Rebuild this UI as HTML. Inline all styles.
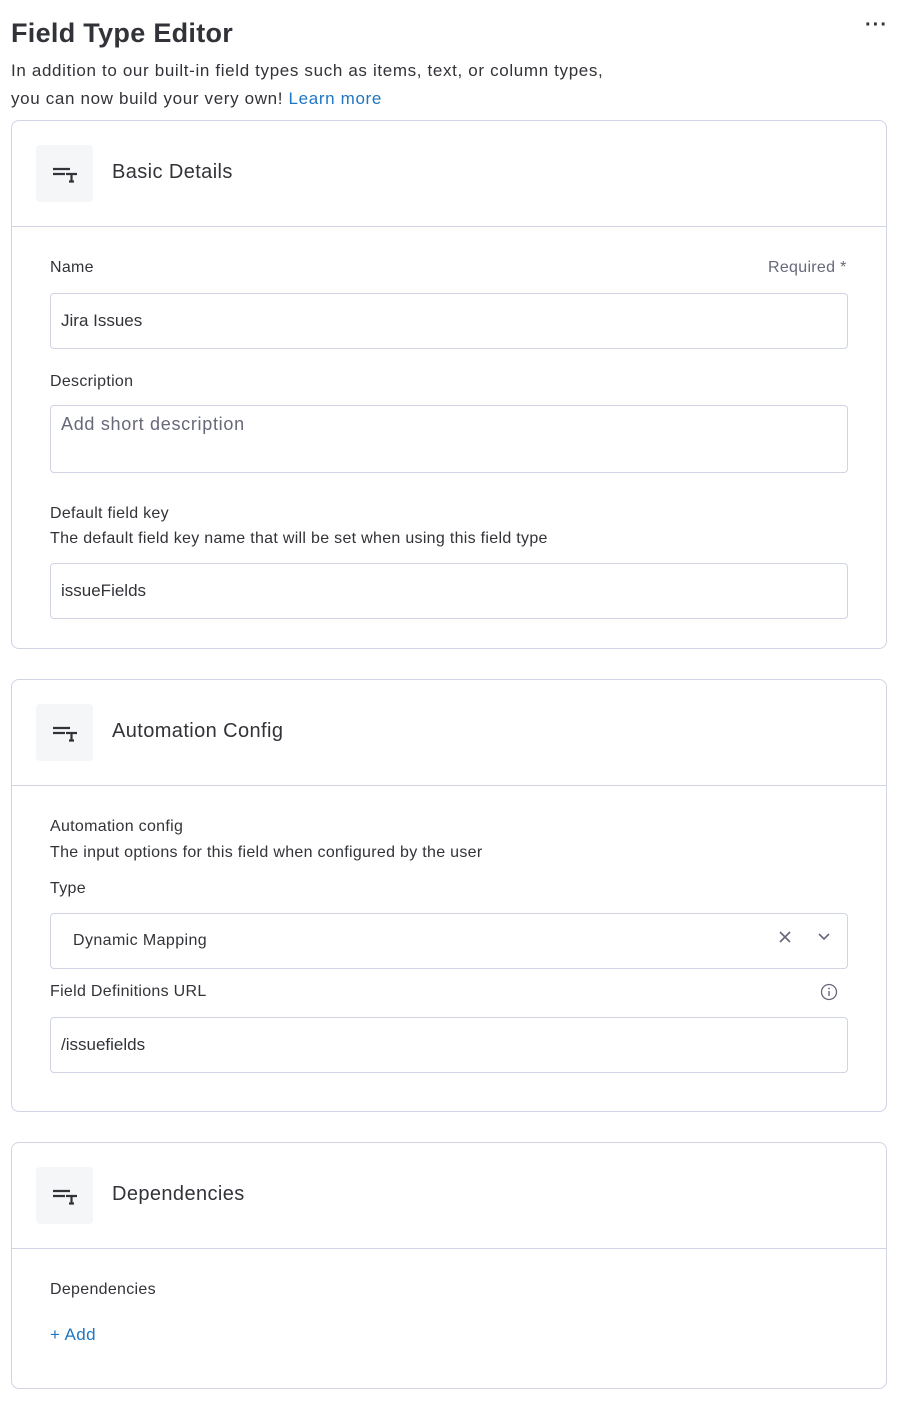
<!DOCTYPE html>
<html><head><style>
*{box-sizing:border-box;margin:0;padding:0}
body{width:900px;height:1404px;background:#fff;font-family:"Liberation Sans",sans-serif;color:#323338;position:relative;overflow:hidden}
.a{position:absolute}
.card{position:absolute;left:11px;width:876px;border:1px solid #d0d4e4;border-radius:8px}
.div{position:absolute;left:0;right:0;height:1px;background:#d0d4e4}
.ib{position:absolute;left:24px;top:24px;width:57px;height:57px;background:#f5f6f8;border-radius:4px}
.ht{position:absolute;left:100px;top:40px;font-size:20px;letter-spacing:0.4px}
.lbl{position:absolute;font-size:16px;letter-spacing:0.3px;color:#323338}
.inp{position:absolute;left:50px;width:798px;border:1px solid #d0d4e4;border-radius:4px;font-size:17px;padding-left:10px}
</style></head><body>
<div class="a" style="left:11px;top:18px;font-size:27px;font-weight:bold;letter-spacing:0.3px">Field Type Editor</div>
<div class="a" style="left:865px;top:14px;font-size:20px;font-weight:bold;letter-spacing:1px">···</div>
<div class="a" style="left:11px;top:57px;font-size:17px;line-height:28px;letter-spacing:0.65px">In addition to our built-in field types such as items, text, or column types,<br>you can now build your very own! <span style="color:#1f76c2">Learn more</span></div>

<div class="card" style="top:120px;height:529px">
<div class="ib"><svg class="a" style="left:16px;top:20px" width="26" height="18" viewBox="0 0 26 18"><path d="M1 4h17M1 9h12M14 9h11M19.5 9v8M17 16.5h5" stroke="#323338" stroke-width="2.2" fill="none"/></svg></div>
<div class="ht">Basic Details</div>
<div class="div" style="top:105px"></div>
</div>
<div class="lbl" style="left:50px;top:259px">Name</div>
<div class="lbl" style="left:768px;top:259px;color:#676879">Required *</div>
<div class="inp" style="top:293px;height:56px;line-height:54px">Jira Issues</div>
<div class="lbl" style="left:50px;top:373px">Description</div>
<div class="inp" style="top:405px;height:68px;padding-top:8px;color:#676879;font-size:18px;letter-spacing:0.7px">Add short description</div>
<div class="lbl" style="left:50px;top:505px">Default field key</div>
<div class="lbl" style="left:50px;top:530px">The default field key name that will be set when using this field type</div>
<div class="inp" style="top:563px;height:56px;line-height:54px">issueFields</div>

<div class="card" style="top:679px;height:433px">
<div class="ib"><svg class="a" style="left:16px;top:20px" width="26" height="18" viewBox="0 0 26 18"><path d="M1 4h17M1 9h12M14 9h11M19.5 9v8M17 16.5h5" stroke="#323338" stroke-width="2.2" fill="none"/></svg></div>
<div class="ht">Automation Config</div>
<div class="div" style="top:105px"></div>
</div>
<div class="lbl" style="left:50px;top:818px">Automation config</div>
<div class="lbl" style="left:50px;top:844px">The input options for this field when configured by the user</div>
<div class="lbl" style="left:50px;top:880px">Type</div>
<div class="inp" style="top:913px;height:56px;line-height:54px;padding-left:22px;font-size:16px;letter-spacing:0.4px">Dynamic Mapping
<svg class="a" style="left:728px;top:17px" width="12" height="12"><path d="M1 1l10 10M11 1L1 11" stroke="#676879" stroke-width="1.6"/></svg>
<svg class="a" style="left:767px;top:19px" width="12" height="8"><path d="M1 1l5 5 5-5" stroke="#676879" stroke-width="1.6" fill="none"/></svg></div>
<div class="lbl" style="left:50px;top:983px">Field Definitions URL</div>
<svg class="a" style="left:820px;top:983px" width="18" height="18"><circle cx="9" cy="9" r="7.5" stroke="#676879" stroke-width="1.3" fill="none"/><path d="M9 8v5" stroke="#676879" stroke-width="1.4"/><circle cx="9" cy="5.5" r="0.9" fill="#676879"/></svg>
<div class="inp" style="top:1017px;height:56px;line-height:54px">/issuefields</div>

<div class="card" style="top:1142px;height:247px">
<div class="ib"><svg class="a" style="left:16px;top:20px" width="26" height="18" viewBox="0 0 26 18"><path d="M1 4h17M1 9h12M14 9h11M19.5 9v8M17 16.5h5" stroke="#323338" stroke-width="2.2" fill="none"/></svg></div>
<div class="ht">Dependencies</div>
<div class="div" style="top:105px"></div>
</div>
<div class="lbl" style="left:50px;top:1281px">Dependencies</div>
<div class="a" style="left:50px;top:1325px;font-size:17px;color:#1f76c2;letter-spacing:0.4px">+ Add</div>
</body></html>
